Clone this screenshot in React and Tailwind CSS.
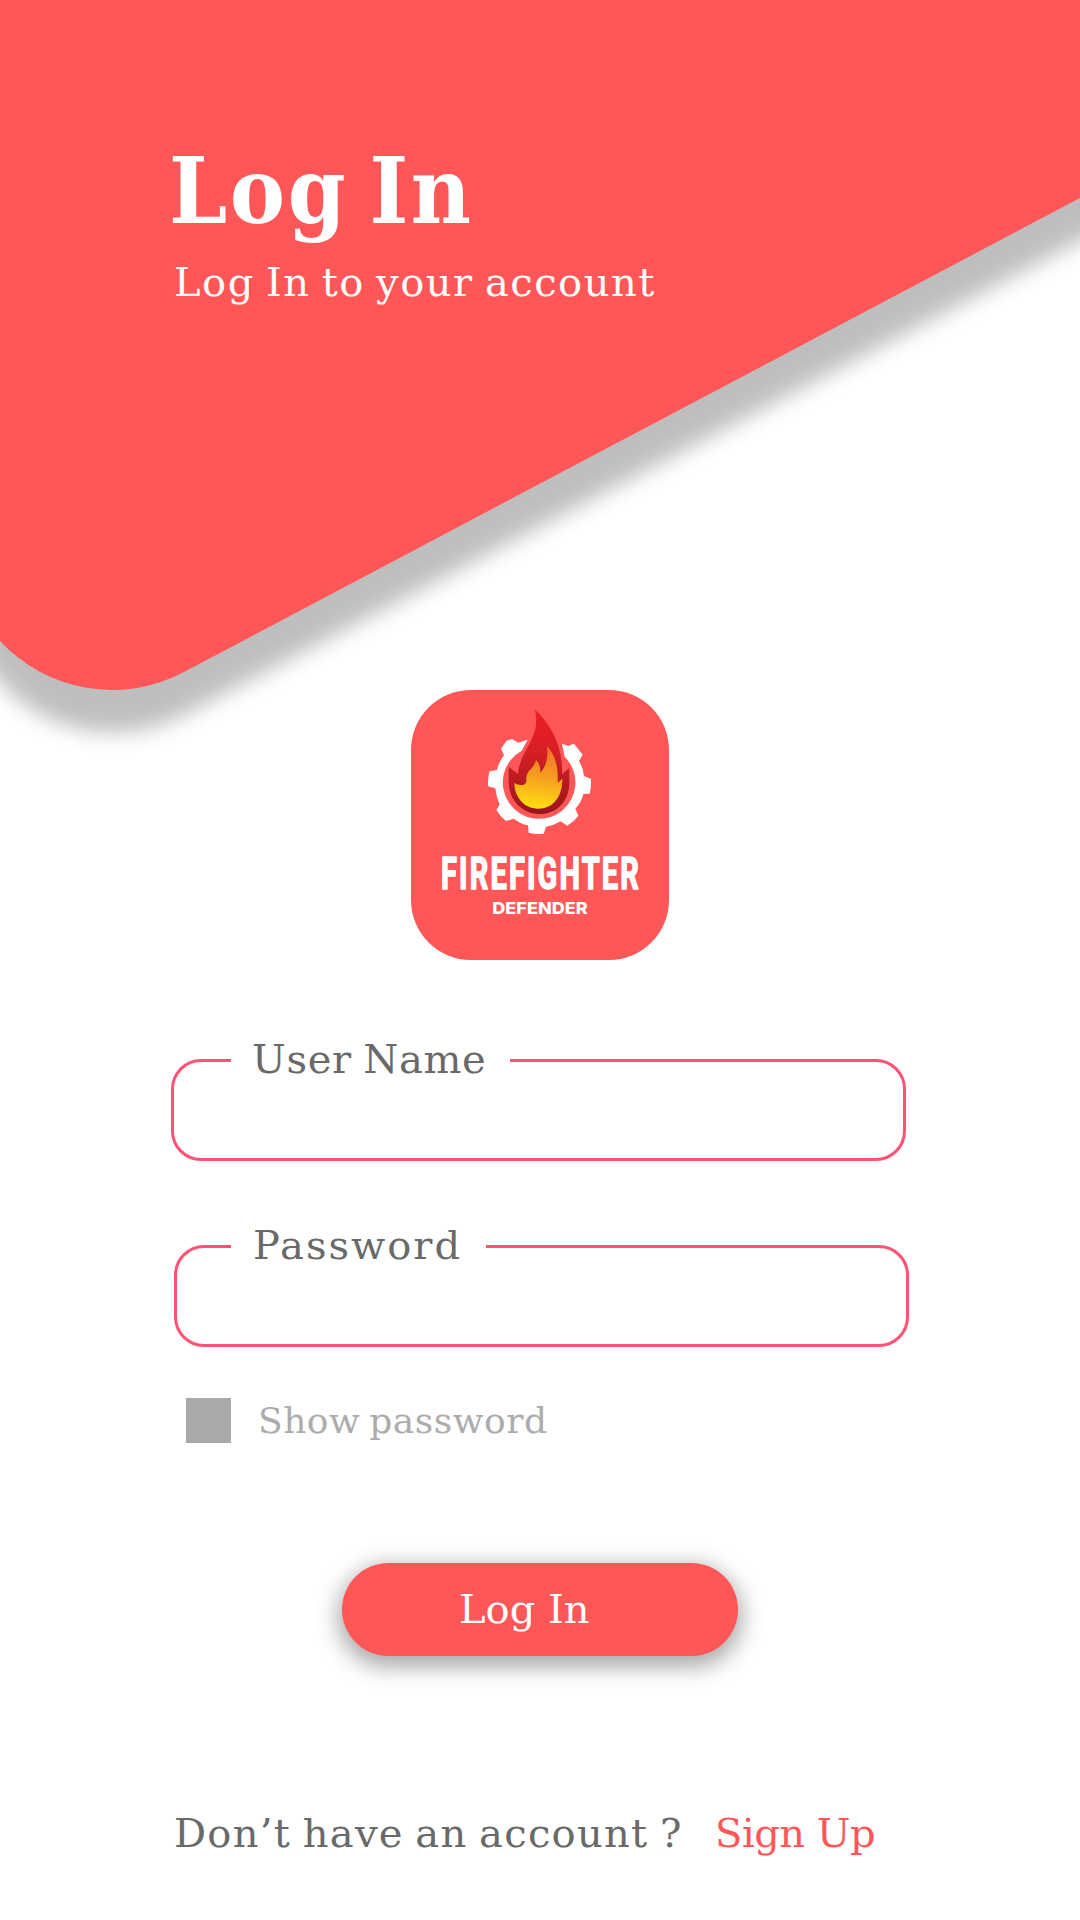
function HeaderShape() {
  return (
    <svg className="absolute inset-0" width="1080" height="800" viewBox="0 0 1080 800" aria-hidden="true">
      <defs>
        <filter id="soft" x="-20%" y="-20%" width="140%" height="140%">
          <feGaussianBlur stdDeviation="10.5" />
        </filter>
      </defs>
      <path
        d="M-80 -100H1280V92.5L183 672.5A152.5 152.5 0 0 1 -30 590Z"
        fill="#000"
        opacity="0.25"
        filter="url(#soft)"
        transform="translate(0 43)"
      />
      <path d="M0 0H1080V198L183 672.5A152.5 152.5 0 0 1 0 641Z" fill="#ff5757" />
    </svg>
  );
}

function Logo() {
  return (
    <svg className="block overflow-visible" width="258" height="270" viewBox="33 30 774 810" role="img" aria-label="Firefighter Defender">
      <defs>
        <linearGradient id="outerFlame" x1="0" y1="0" x2="0" y2="1">
          <stop offset="0" stopColor="#ef1c25" />
          <stop offset="0.4" stopColor="#d71f27" />
          <stop offset="1" stopColor="#99161b" />
        </linearGradient>
        <linearGradient id="innerFlame" x1="0.5" y1="0" x2="0.4" y2="1">
          <stop offset="0" stopColor="#f1702a" />
          <stop offset="0.5" stopColor="#f7a01f" />
          <stop offset="1" stopColor="#fee011" />
        </linearGradient>
      </defs>
      <path
        fill="#fff"
        d="M383 179L355 188L336 177L320 182L303 206L312 226Q296 246 291 270L268 274Q263 296 264 319L286 325Q289 352 299 374L289 390Q300 409 318 423L341 416Q361 431 384 436L386 458Q408 464 431 461L438 440Q461 437 482 424L502 437Q521 426 535 408L526 386Q544 368 550 342L569 341Q574 320 573 297L552 288Q550 264 537 243L548 224L522 191L506 197L486 192L494 230A109 109 0 1 1 365 212Z"
      />
      <path
        fill="url(#outerFlame)"
        d="M404 88C452 132 490 200 486 283L508 264V308C508 365 468 402 420 402C368 402 326 362 326 305V260L354 282C356 250 370 225 386 196C405 160 415 130 404 88Z"
      />
      <path
        fill="url(#innerFlame)"
        d="M441 198C465 225 475 255 473 308L487 296C487 350 460 386 414 386C372 386 343 350 343 309C352 314 360 316 368 315C378 313 380 306 379 298C378 270 402 268 408 240C418 252 422 262 421 278C435 262 446 240 441 198Z"
      />
      <text
        x="123" y="627" fill="#fff" stroke="#fff" strokeWidth="5" strokeLinejoin="round" fontFamily="Roboto, sans-serif"
        fontWeight="700" letterSpacing="10" fontSize="131" textLength="600" lengthAdjust="spacingAndGlyphs"
      >
        FIREFIGHTER
      </text>
      <text
        x="277" y="702" fill="#fff" fontFamily="Inter, sans-serif" fontWeight="800"
        fontSize="49" textLength="286" lengthAdjust="spacingAndGlyphs"
      >
        DEFENDER
      </text>
    </svg>
  );
}

function Field({ label, type, className, labelClass }) {
  return (
    <label className={`relative block h-[102px] w-[735px] rounded-[30px] border-[3px] border-[#ff5274] ${className}`}>
      <span className={`absolute -top-[27px] flex h-[48px] items-center bg-white whitespace-nowrap ${labelClass}`}>
        {label}
      </span>
      <input type={type} className="h-full w-full rounded-[27px] bg-transparent px-8 outline-none" />
    </label>
  );
}

export default function App() {
  return (
    <main className="relative flex h-[1920px] w-[1080px] flex-col overflow-hidden bg-white font-['DejaVu_Serif',serif] text-[40px] leading-[48px] text-[#696969]">
      <HeaderShape />
      <header className="relative h-[690px] pt-[136px] pl-[169px] text-white">
        <h1 className="font-['DejaVu_Serif_Condensed','DejaVu_Serif',serif] text-[92px] leading-[110px] font-bold tracking-[2.6px] [word-spacing:-10px] font-stretch-semi-condensed">
          Log In
        </h1>
        <p className="mt-[12px] pl-[5px] tracking-[1.5px] [word-spacing:-3px]">Log In to your account</p>
      </header>
      <div className="relative ml-[411px] h-[270px] w-[258px] rounded-[60px] bg-[#ff5757]">
        <Logo />
      </div>
      <form className="mt-[99px] flex flex-col">
        <Field label="User Name" type="text" className="ml-[171px]" labelClass="left-[57px] w-[279px] pl-[21px] tracking-[0.7px] [word-spacing:-2px]" />
        <Field label="Password" type="password" className="mt-[84px] ml-[174px]" labelClass="left-[54px] w-[255px] pl-[22px] tracking-[2px]" />
        <div className="mt-[51px] ml-[186px] flex h-[45px] items-center gap-[27px] text-[36px] tracking-[0.5px] [word-spacing:-3px] text-[#acacac]">
          <span className="size-[45px] bg-[#aaa8a8]" />
          <span>Show password</span>
        </div>
        <button type="button" className="mt-[120px] ml-[342px] h-[93px] w-[396px] rounded-full bg-[#ff5757] pb-[2px] pl-[117px] text-left text-white shadow-[0_7px_22px_4px_rgba(0,0,0,0.34)]">
          Log In
        </button>
      </form>
      <p className="mt-[153px] flex pl-[174px] whitespace-nowrap">
        <span className="w-[541px] tracking-[1.3px] [word-spacing:-2.5px]">Don’t have an account ?</span>
        <a className="tracking-[-0.5px] text-[#ff5757]">Sign Up</a>
      </p>
    </main>
  );
}
